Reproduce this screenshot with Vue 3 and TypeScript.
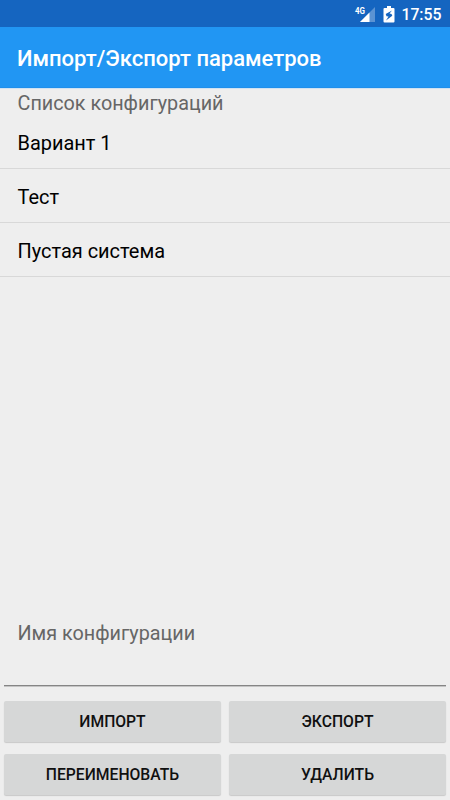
<script setup lang="ts">
interface Configuration {
  id: number
  name: string
}

const configurations: Configuration[] = [
  { id: 1, name: 'Вариант 1' },
  { id: 2, name: 'Тест' },
  { id: 3, name: 'Пустая система' },
]
const actions: string[] = ['Импорт', 'Экспорт', 'Переименовать', 'Удалить']
</script>

<template>
  <div class="screen">
    <div class="status-bar">
      <svg class="signal" width="22" height="18" viewBox="0 0 22 18">
        <path d="M21 2v15H6z" fill="#fff" fill-opacity=".3" />
        <path d="M15.500 7.500v9.500H6z" fill="#fff" />
        <text class="network" x="1" y="8.500" textLength="10" lengthAdjust="spacingAndGlyphs">4G</text>
      </svg>
      <svg class="battery" width="12" height="17" viewBox="0 0 12 17">
        <path d="M4 0h4v2h2.500q1 0 1 1v12.500q0 1-1 1h-9q-1 0-1-1V3q0-1 1-1H4z" fill="#fff" />
        <path d="M9 4.500L2.700 8l.8 2.200 2 .2L3 14.500l6.300-4.700-.8-1.800-2-.5z" fill="#1565c0" />
      </svg>
      <span class="clock">17:55</span>
    </div>
    <header class="app-bar">
      <h1>Импорт/Экспорт параметров</h1>
    </header>
    <main class="content">
      <h2 class="label">Список конфигураций</h2>
      <ul class="list">
        <li v-for="item in configurations" :key="item.id"><span>{{ item.name }}</span></li>
      </ul>
      <label class="label name-label" for="config-name">Имя конфигурации</label>
      <input id="config-name" class="name-input" type="text" />
      <div class="actions">
        <button v-for="action in actions" :key="action" type="button">{{ action }}</button>
      </div>
    </main>
  </div>
</template>

<style>
body {
  background: #eee;
}
</style>

<style scoped>
.screen {
  display: flex;
  flex-direction: column;
  width: 450px;
  height: 800px;
  overflow: hidden;
  background: #eee;
  font-family: Roboto, sans-serif;
}
.status-bar {
  display: flex;
  align-items: center;
  justify-content: flex-end;
  box-sizing: border-box;
  flex: none;
  height: 27px;
  padding: 1px 8.5px 0 0;
  background: #1565c0;
  color: #fff;
}
.signal {
  margin-top: -1px;
}
.battery {
  margin: 0 6.5px 0 7px;
}
.network {
  font: 700 8.5px Roboto, sans-serif;
  fill: #fff;
}
.clock {
  padding-top: 1px;
  font-size: 15.8px;
  font-weight: 500;
}
.app-bar {
  display: flex;
  align-items: center;
  box-sizing: border-box;
  flex: none;
  height: 61px;
  padding: 2px 17px 0;
  border-bottom: 1px solid #1f8fec;
  background: #2196f3;
  color: #fff;
}
h1 {
  margin: 0;
  font-size: 22px;
  font-weight: 500;
  white-space: nowrap;
}
.content {
  display: flex;
  flex-direction: column;
  flex: 1;
  min-height: 0;
  box-shadow: inset 0 1px #cfe3f3;
}
.label {
  margin: 0;
  padding-left: 17.5px;
  font-size: 19.8px;
  font-weight: 400;
  line-height: 28px;
  color: #666;
}
h2.label {
  height: 27px;
  line-height: 32px;
}
.name-label {
  line-height: 30px;
}
.list {
  flex: 1;
  margin: 0;
  padding: 0;
  list-style: none;
}
.list li {
  display: flex;
  align-items: center;
  box-sizing: border-box;
  height: 54px;
  padding: 3px 0 0 17.5px;
  border-bottom: 1px solid #d8d8d8;
  font-size: 19.95px;
  color: #000;
}
.name-input {
  box-sizing: border-box;
  height: 37px;
  margin: 0 4px 15px;
  padding: 0 14px;
  border: 0;
  border-bottom: 1px solid #858585;
  background: transparent;
  box-shadow: 0 1px #c4c4c4;
  font: 19.8px Roboto, sans-serif;
  outline: none;
}
.actions {
  display: grid;
  grid-template-columns: 1fr 1fr;
  gap: 12px 8px;
  padding: 0 4px 5px;
}
button {
  height: 41px;
  padding: 0;
  border: 0;
  border-radius: 2px;
  background: #d6d7d7;
  box-shadow: 0 1px 1px rgba(0, 0, 0, 0.16);
  font: 500 15.7px Roboto, sans-serif;
  text-transform: uppercase;
  color: #101010;
}
</style>
